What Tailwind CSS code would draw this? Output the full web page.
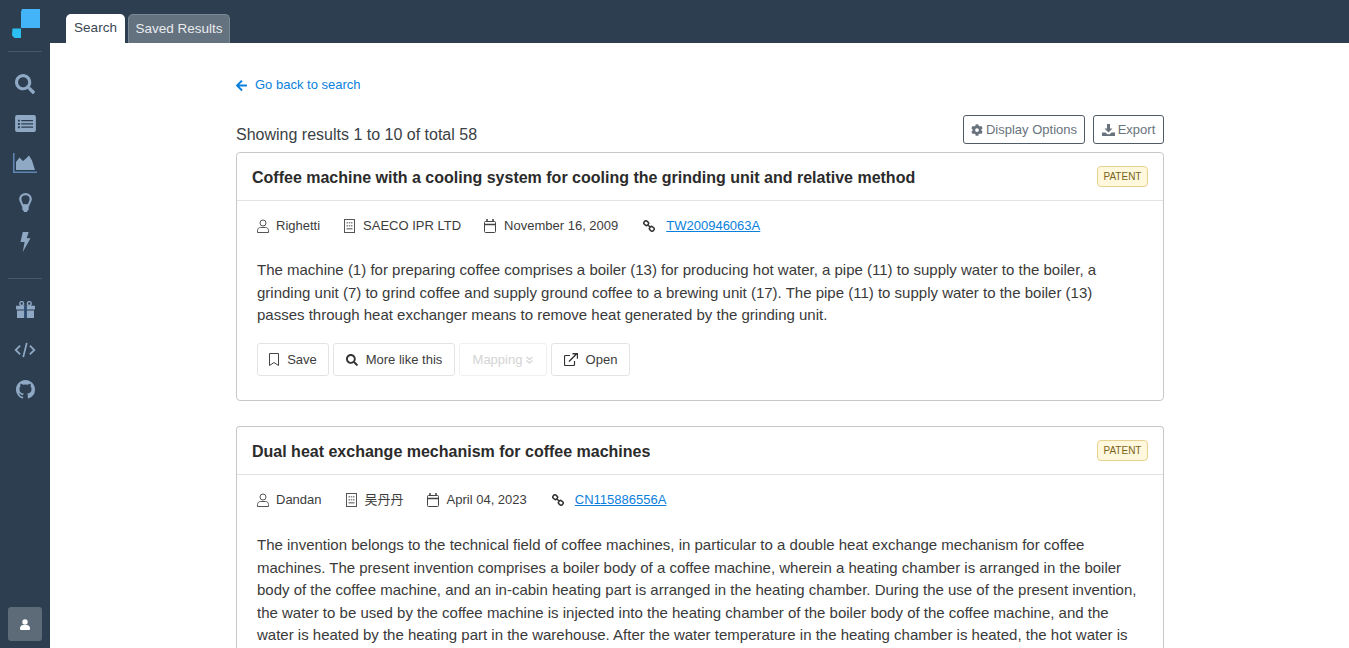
<!DOCTYPE html>
<html lang="en">
<head>
  <meta charset="UTF-8" />
  <title>Search results</title>
  <script src="https://cdn.jsdelivr.net/npm/@tailwindcss/browser@4"></script>
</head>
<body class="h-[648px] overflow-hidden flex bg-white font-['Liberation_Sans','Noto_Sans_CJK_SC',sans-serif] text-[#333]">

  <!-- sidebar -->
  <aside class="w-[50px] h-[648px] shrink-0 bg-[#2c3e50] flex flex-col items-center">
    <svg class="w-[30px] h-[30px] mt-[9px] ml-[2px]" viewBox="0 0 30 30">
      <path d="M11 0H29v19H10V3z" fill="#43b4f7"/>
      <path d="M1.500 19.500H10V29H3.500L1 26.500z" fill="#2cc0f2"/>
    </svg>
    <div class="w-[34px] h-px bg-[#46586a] mt-[12px]"></div>

    <div class="flex flex-col items-center text-[#8fa8c4] mt-[12px]">
      <div class="h-[39.500px] flex items-center"><svg class="w-[20px] h-[20px]" viewBox="0 0 512 512" fill="currentColor"><path d="M505 442.700 405.300 343c-4.500-4.500-10.600-7-17-7H372c27.600-35.300 44-79.700 44-128C416 93.100 322.900 0 208 0S0 93.100 0 208s93.100 208 208 208c48.300 0 92.700-16.400 128-44v16.300c0 6.400 2.500 12.500 7 17l99.700 99.700c9.400 9.400 24.600 9.400 33.900 0l28.300-28.300c9.400-9.400 9.400-24.600.1-34zM208 336c-70.700 0-128-57.200-128-128 0-70.700 57.200-128 128-128 70.700 0 128 57.200 128 128 0 70.700-57.200 128-128 128z"/></svg></div>
      <div class="h-[39.500px] flex items-center"><svg class="w-[21px] h-[17px]" viewBox="0 0 22 18"><rect width="22" height="18" rx="2" fill="currentColor"/><path d="M3 5h2v2H3zM3 8.500h2v2H3zM3 12h2v2H3z" fill="#2c3e50"/><path d="M6.500 5.300H19v1.200H6.500zM6.500 8.800H19V10H6.500zM6.500 12.300H19v1.200H6.500z" fill="#2c3e50"/></svg></div>
      <div class="h-[39.500px] flex items-center"><svg class="w-[24px] h-[20px]" viewBox="0 0 24 20"><path d="M0 0h1.500v18.500H24V20H0z" fill="#5f86b5"/><path d="M3 17V9l3.500-4.500L10 8l3-2.500L16 2.500l3 5 3 9.500z" fill="currentColor"/></svg></div>
      <div class="h-[39.500px] flex items-center"><svg class="w-[13px] h-[19px]" viewBox="0 0 14 21"><path d="M7 0a7 7 0 0 0-7 7c0 3 2.500 4.500 3 8h8c.5-3.500 3-5 3-8a7 7 0 0 0-7-7zm0 2.500A4.500 4.500 0 0 1 11.500 7c0 1.600-1 3-2 5.500h-5C3.500 10 2.500 8.600 2.500 7A4.500 4.500 0 0 1 7 2.500z" fill="currentColor"/><path d="M3.500 13h7V18l-2 3h-3l-2-3z" fill="currentColor"/></svg></div>
      <div class="h-[39.500px] flex items-center"><svg class="w-[11px] h-[20px]" viewBox="0 0 11 22"><path d="M2.500 0H9L6.800 7H11L2.500 22 4.500 11H0z" fill="currentColor"/></svg></div>
    </div>

    <div class="w-[34px] h-px bg-[#46586a] mt-[16px]"></div>

    <div class="flex flex-col items-center text-[#8fa8c4] mt-[11px]">
      <div class="h-[40px] flex items-center"><svg class="w-[19px] h-[17px]" viewBox="0 0 20 18"><path d="M0 5h20v4H0zM1 10h18v8H1z" fill="currentColor"/><path d="M8.500 5h3v13h-3z" fill="#2d4a70"/><circle cx="6" cy="2.700" r="2" fill="none" stroke="currentColor" stroke-width="1.500"/><circle cx="14" cy="2.700" r="2" fill="none" stroke="currentColor" stroke-width="1.500"/></svg></div>
      <div class="h-[40px] flex items-center"><svg class="w-[22px] h-[16px]" viewBox="0 0 24 18" fill="none" stroke="currentColor" stroke-width="2"><path d="M6.500 4 1.500 9l5 5M17.500 4l5 5-5 5M14 1l-4 16"/></svg></div>
      <div class="h-[40px] flex items-center"><svg class="w-[19px] h-[19px]" viewBox="0 0 24 24" fill="currentColor"><path d="M12 0C5.400 0 0 5.400 0 12c0 5.300 3.400 9.800 8.200 11.400.6.100.8-.3.800-.6v-2.100c-3.300.7-4-1.600-4-1.600-.5-1.400-1.300-1.800-1.300-1.800-1.100-.7.100-.7.100-.7 1.200.1 1.800 1.200 1.800 1.200 1.100 1.800 2.800 1.300 3.500 1 .1-.8.400-1.300.8-1.600-2.700-.3-5.500-1.300-5.500-5.900 0-1.300.5-2.400 1.200-3.200-.1-.3-.5-1.500.1-3.200 0 0 1-.3 3.300 1.200a11.500 11.500 0 0 1 6 0c2.300-1.500 3.300-1.200 3.300-1.200.7 1.700.2 2.900.1 3.200.8.800 1.200 1.900 1.200 3.200 0 4.600-2.800 5.600-5.500 5.900.4.400.8 1.100.8 2.200v3.300c0 .3.200.7.800.6A12 12 0 0 0 24 12c0-6.600-5.400-12-12-12z"/></svg></div>
    </div>

    <div class="mt-auto mb-[7px] w-[34px] h-[34px] rounded-[3px] bg-[#5d6b78] flex items-center justify-center">
      <svg class="w-[10px] h-[11px]" viewBox="0 0 10 11" fill="#fff"><circle cx="5" cy="3" r="2.700"/><path d="M1 11c-1 0-1-1-1-1.500C0 7.500 1.500 6 3 6h4c1.500 0 3 1.500 3 3.500 0 .5 0 1.500-1 1.500z"/></svg>
    </div>
  </aside>

  <div class="flex-1 min-w-0 h-[648px] overflow-hidden flex flex-col">
    <!-- tabs -->
    <nav class="h-[43px] shrink-0 bg-[#2c3e50] flex items-end pl-[16px] gap-[3px] text-[13.500px]">
      <div class="h-[29px] w-[59px] bg-white rounded-t-[5px] flex items-center justify-center text-[#3a4754]">Search</div>
      <div class="h-[29px] w-[102px] bg-[#64717e] border border-b-0 border-[#7d8995] rounded-t-[5px] flex items-center justify-center text-[#e8ecef]">Saved Results</div>
    </nav>

    <!-- results -->
    <main class="w-[928px] ml-[186px]">
      <a class="flex items-center gap-[8px] mt-[33px] h-[18px] text-[13px] text-[#0a7fdc]">
        <svg class="w-[11px] h-[11px]" viewBox="0 0 448 448" fill="#0a7fdc"><path d="m257 420-22 22c-10 10-25 10-34 0L7 248c-9-10-9-25 0-34L201 20c9-10 24-10 34 0l22 22c10 10 10 25 0 35L137 191h287c13 0 24 11 24 24v32c0 13-11 24-24 24H137l120 114c10 10 10 25 0 35z" transform="translate(0 -6)"/></svg>
        Go back to search
      </a>

      <div class="flex justify-between items-end mt-[21px]">
        <span class="text-[16px] text-[#3a3f44] leading-[19px]">Showing results 1 to 10 of total 58</span>
        <div class="flex gap-[8px]">
          <button class="h-[29px] w-[122px] border border-[#4f5b66] rounded-[3px] flex items-center justify-center gap-[3px] text-[13px] text-[#68727c]">
            <svg class="w-[12px] h-[12px]" viewBox="0 0 512 512" fill="#68727c"><path d="M487 316l-42-25a190 190 0 0 0 0-70l42-25c5-3 7-8 5-14a249 249 0 0 0-54-93c-4-4-10-5-15-2l-42 24a190 190 0 0 0-61-35V28c0-6-4-11-9-12a251 251 0 0 0-110 0c-5 1-9 6-9 12v48a190 190 0 0 0-61 35l-42-24c-5-3-11-2-15 2a248 248 0 0 0-54 93c-2 6 0 11 5 14l42 25a190 190 0 0 0 0 70l-42 25c-5 3-7 8-5 14 11 35 30 66 54 93 4 4 10 5 15 2l42-24c18 15 39 27 61 35v48c0 6 4 11 9 12 37 8 74 8 110 0 5-1 9-6 9-12v-48c22-8 43-20 61-35l42 24c5 3 11 2 15-2 24-27 43-58 54-93 2-6 0-11-5-14zM256 336a80 80 0 1 1 0-160 80 80 0 0 1 0 160z"/></svg>
            Display Options
          </button>
          <button class="h-[29px] w-[71px] border border-[#4f5b66] rounded-[3px] flex items-center justify-center gap-[3px] text-[13px] text-[#68727c]">
            <svg class="w-[13px] h-[12px]" viewBox="0 0 13 12" fill="#68727c"><path d="M5 0h3v4.500h2.500L6.500 8.500l-4-4H5z"/><path d="M0 8.500h3.500l1.800 1.800h2.400L9.500 8.500H13V12H0z"/></svg>
            Export
          </button>
        </div>
      </div>

      <!-- card 1 -->
      <article class="mt-[8px] border border-[#c8c8c8] rounded-[4px] h-[249px]">
        <header class="h-[48px] border-b border-[#e2e2e2] flex items-center justify-between pl-[15px] pr-[15px]">
          <h2 class="text-[16px] font-bold text-[#2b2b2b] mt-[2px]">Coffee machine with a cooling system for cooling the grinding unit and relative method</h2>
          <span class="h-[21px] w-[51px] justify-center flex items-center rounded-[4px] border border-[#e6d28e] bg-[#fff8dc] text-[10px] text-[#7a6420]">PATENT</span>
        </header>
        <div class="px-[20px]">
          <div class="flex items-center h-[16px] mt-[17px] text-[13px] text-[#3c3c3c]">
            <svg class="w-[12px] h-[14px] mr-[7px]" viewBox="0 0 12 14" fill="none" stroke="#555" stroke-width="1"><circle cx="6" cy="4" r="3"/><path d="M.500 13.500v-2c0-2 1.500-3 3-3h5c1.500 0 3 1 3 3v2z"/></svg>
            <span class="mr-[24px]">Righetti</span>
            <svg class="w-[11px] h-[14px] mr-[8px]" viewBox="0 0 11 14"><rect x=".5" y=".5" width="10" height="13" fill="none" stroke="#555"/><path d="M2.500 3h1.500v1.500H2.500zM4.800 3h1.500v1.500H4.800zM7 3h1.500v1.500H7zM2.500 6h1.500v1.500H2.500zM4.800 6h1.500v1.500H4.800zM7 6h1.500v1.500H7zM2.500 9h6v1.500h-6z" fill="#888"/></svg>
            <span class="mr-[23px]">SAECO IPR LTD</span>
            <svg class="w-[12px] h-[14px] mr-[8px]" viewBox="0 0 12 14" fill="none" stroke="#444"><rect x=".5" y="2.500" width="11" height="11" rx="1"/><path d="M.5 5.500h11" stroke-width="1.500"/><path d="M3 0v3M9 0v3" stroke-width="1.500"/></svg>
            <span class="mr-[25px]">November 16, 2009</span>
            <svg class="w-[12px] h-[12px] mr-[11px]" viewBox="0 0 12 12" fill="none" stroke="#333" stroke-width="1.500"><rect x="1" y="1" width="4.500" height="4" rx="1.500" transform="rotate(40 3 3)"/><rect x="6.500" y="7" width="4.500" height="4" rx="1.500" transform="rotate(40 9 9)"/><path d="M5 5l2 2"/></svg>
            <a class="text-[#0a7fdc] underline">TW200946063A</a>
          </div>
          <p class="mt-[25px] text-[15px] leading-[22.500px] text-[#3a3a3a]">The machine (1) for preparing coffee comprises a boiler (13) for producing hot water, a pipe (11) to supply water to the boiler, a grinding unit (7) to grind coffee and supply ground coffee to a brewing unit (17). The pipe (11) to supply water to the boiler (13) passes through heat exchanger means to remove heat generated by the grinding unit.</p>
          <div class="flex gap-[4px] mt-[16px] text-[13px] text-[#3c3c3c]">
            <button class="h-[33px] w-[72px] pt-[1px] border border-[#e4e4e4] rounded-[3px] flex items-center justify-center gap-[8px]">
              <svg class="w-[10px] h-[13px]" viewBox="0 0 10 13" fill="none" stroke="#444"><path d="M.5.5h9v12L5 9.500.5 12.500z"/></svg>Save</button>
            <button class="h-[33px] w-[122px] pt-[1px] border border-[#e4e4e4] rounded-[3px] flex items-center justify-center gap-[8px]">
              <svg class="w-[12px] h-[12px]" viewBox="0 0 512 512" fill="#333"><path d="M505 442.700 405.300 343c-4.500-4.500-10.600-7-17-7H372c27.600-35.300 44-79.700 44-128C416 93.100 322.900 0 208 0S0 93.100 0 208s93.100 208 208 208c48.300 0 92.700-16.400 128-44v16.300c0 6.400 2.500 12.500 7 17l99.700 99.700c9.400 9.400 24.600 9.400 33.900 0l28.300-28.300c9.400-9.400 9.400-24.600.1-34zM208 336c-70.700 0-128-57.200-128-128 0-70.700 57.200-128 128-128 70.700 0 128 57.200 128 128 0 70.700-57.200 128-128 128z"/></svg>More like this</button>
            <button class="h-[33px] w-[88px] pt-[1px] border border-[#efefef] rounded-[3px] flex items-center justify-center gap-[4px] text-[#d4d4d4]">Mapping
              <svg class="w-[7px] h-[8px]" viewBox="0 0 7 8" fill="none" stroke="#d4d4d4" stroke-width="1.300"><path d="M.5 1l3 2.500L6.500 1M.5 4.500l3 2.500 3-2.500"/></svg></button>
            <button class="h-[33px] w-[79px] pt-[1px] border border-[#e4e4e4] rounded-[3px] flex items-center justify-center gap-[8px]">
              <svg class="w-[14px] h-[13px]" viewBox="0 0 14 13" fill="none" stroke="#333" stroke-width="1.200"><path d="M6 2.500H1.500a1 1 0 0 0-1 1v8a1 1 0 0 0 1 1h8a1 1 0 0 0 1-1V8"/><path d="M5 8.500 12.500 1M8.500.700h5v5" stroke-width="1.400"/></svg>Open</button>
          </div>
        </div>
      </article>

      <!-- card 2, runs off the bottom of the window -->
      <article class="mt-[25px] border border-b-0 border-[#c8c8c8] rounded-t-[4px] h-[222px] overflow-hidden">
        <header class="h-[48px] border-b border-[#e2e2e2] flex items-center justify-between pl-[15px] pr-[15px]">
          <h2 class="text-[16px] font-bold text-[#2b2b2b] mt-[2px]">Dual heat exchange mechanism for coffee machines</h2>
          <span class="h-[21px] w-[51px] justify-center flex items-center rounded-[4px] border border-[#e6d28e] bg-[#fff8dc] text-[10px] text-[#7a6420]">PATENT</span>
        </header>
        <div class="px-[20px]">
          <div class="flex items-center h-[16px] mt-[17px] text-[13px] text-[#3c3c3c]">
            <svg class="w-[12px] h-[14px] mr-[7px]" viewBox="0 0 12 14" fill="none" stroke="#555" stroke-width="1"><circle cx="6" cy="4" r="3"/><path d="M.500 13.500v-2c0-2 1.500-3 3-3h5c1.500 0 3 1 3 3v2z"/></svg>
            <span class="mr-[24px]">Dandan</span>
            <svg class="w-[11px] h-[14px] mr-[8px]" viewBox="0 0 11 14"><rect x=".5" y=".5" width="10" height="13" fill="none" stroke="#555"/><path d="M2.500 3h1.500v1.500H2.500zM4.800 3h1.500v1.500H4.800zM7 3h1.500v1.500H7zM2.500 6h1.500v1.500H2.500zM4.800 6h1.500v1.500H4.800zM7 6h1.500v1.500H7zM2.500 9h6v1.500h-6z" fill="#888"/></svg>
            <span class="mr-[23px]">吴丹丹</span>
            <svg class="w-[12px] h-[14px] mr-[8px]" viewBox="0 0 12 14" fill="none" stroke="#444"><rect x=".5" y="2.500" width="11" height="11" rx="1"/><path d="M.5 5.500h11" stroke-width="1.500"/><path d="M3 0v3M9 0v3" stroke-width="1.500"/></svg>
            <span class="mr-[25px]">April 04, 2023</span>
            <svg class="w-[12px] h-[12px] mr-[11px]" viewBox="0 0 12 12" fill="none" stroke="#333" stroke-width="1.500"><rect x="1" y="1" width="4.500" height="4" rx="1.500" transform="rotate(40 3 3)"/><rect x="6.500" y="7" width="4.500" height="4" rx="1.500" transform="rotate(40 9 9)"/><path d="M5 5l2 2"/></svg>
            <a class="text-[#0a7fdc] underline">CN115886556A</a>
          </div>
          <p class="mt-[26px] text-[15px] leading-[22.500px] text-[#3a3a3a]">The invention belongs to the technical field of coffee machines, in particular to a double heat exchange mechanism for coffee machines. The present invention comprises a boiler body of a coffee machine, wherein a heating chamber is arranged in the boiler body of the coffee machine, and an in-cabin heating part is arranged in the heating chamber. During the use of the present invention, the water to be used by the coffee machine is injected into the heating chamber of the boiler body of the coffee machine, and the water is heated by the heating part in the warehouse. After the water temperature in the heating chamber is heated, the hot water is</p>
        </div>
      </article>
    </main>
  </div>
</body>
</html>
